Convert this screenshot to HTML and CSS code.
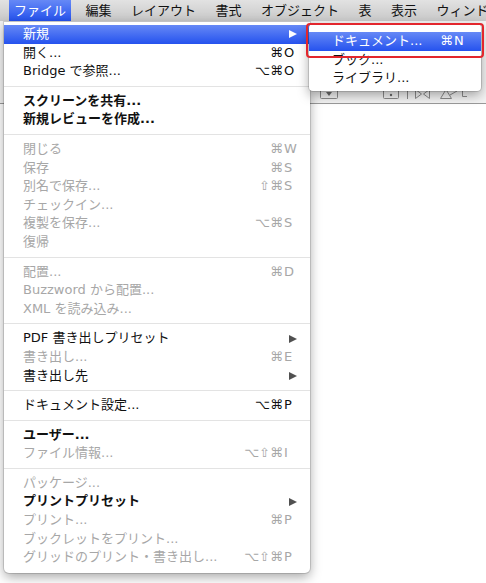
FILE: index.html
```html
<!DOCTYPE html>
<html lang="ja">
<head>
    <meta charset="UTF-8">
    <meta name="viewport" content="width=device-width, initial-scale=1.0">
    <title>ファイル メニュー</title>
    <link rel="stylesheet" href="styles.css">
</head>
<body>
    <header class="menubar">
        <span class="menubar-item is-open">ファイル</span>
        <span class="menubar-item">編集</span>
        <span class="menubar-item">レイアウト</span>
        <span class="menubar-item">書式</span>
        <span class="menubar-item">オブジェクト</span>
        <span class="menubar-item">表</span>
        <span class="menubar-item">表示</span>
        <span class="menubar-item">ウィンドウ</span>
    </header>

    <main class="workspace">
        <div class="toolbar">
            <svg class="toolbar-icons" width="486" height="14" viewBox="0 0 486 14">
                <g fill="none" stroke="#8c8c8c" stroke-width="1">
                    <rect x="320.5" y="0.5" width="17" height="10" rx="1"/>
                    <rect x="383.5" y="0.5" width="15" height="10" rx="1"/>
                    <line x1="407.5" y1="0" x2="407.5" y2="11"/>
                    <path d="M415.5 1.5 L421.5 6 L415.5 10.5 Z"/>
                    <path d="M429.5 1.5 L423.5 6 L429.5 10.5 Z"/>
                    <path d="M440.5 10.5 L446 1.5 L451.5 10.5 Z"/>
                    <path d="M450 7 L457 3"/>
                    <path d="M462.5 0 L462.5 8.5 L467 8.5"/>
                </g>
                <path d="M326 4 L332 4 L329 8 Z" fill="#6a6a6a"/>
                <circle cx="391" cy="7" r="1.2" fill="#6a6a6a"/>
            </svg>
        </div>
        <div class="document"></div>
    </main>

    <nav class="menu file-menu">
        <div class="menu-item is-active"><span class="label">新規</span><span class="arrow"></span></div>
        <div class="menu-item"><span class="label">開く...</span><span class="keys"><span class="mods">⌘</span><span class="key">O</span></span></div>
        <div class="menu-item"><span class="label">Bridge で参照...</span><span class="keys"><span class="mods">⌥⌘</span><span class="key">O</span></span></div>
        <div class="separator"></div>
        <div class="menu-item is-bold"><span class="label">スクリーンを共有...</span></div>
        <div class="menu-item is-bold"><span class="label">新規レビューを作成...</span></div>
        <div class="separator"></div>
        <div class="menu-item is-disabled"><span class="label">閉じる</span><span class="keys"><span class="mods">⌘</span><span class="key">W</span></span></div>
        <div class="menu-item is-disabled"><span class="label">保存</span><span class="keys"><span class="mods">⌘</span><span class="key">S</span></span></div>
        <div class="menu-item is-disabled"><span class="label">別名で保存...</span><span class="keys"><span class="mods">⇧⌘</span><span class="key">S</span></span></div>
        <div class="menu-item is-disabled"><span class="label">チェックイン...</span></div>
        <div class="menu-item is-disabled"><span class="label">複製を保存...</span><span class="keys"><span class="mods">⌥⌘</span><span class="key">S</span></span></div>
        <div class="menu-item is-disabled"><span class="label">復帰</span></div>
        <div class="separator"></div>
        <div class="menu-item is-disabled"><span class="label">配置...</span><span class="keys"><span class="mods">⌘</span><span class="key">D</span></span></div>
        <div class="menu-item is-disabled"><span class="label">Buzzword から配置...</span></div>
        <div class="menu-item is-disabled"><span class="label">XML を読み込み...</span></div>
        <div class="separator"></div>
        <div class="menu-item"><span class="label">PDF 書き出しプリセット</span><span class="arrow"></span></div>
        <div class="menu-item is-disabled"><span class="label">書き出し...</span><span class="keys"><span class="mods">⌘</span><span class="key">E</span></span></div>
        <div class="menu-item"><span class="label">書き出し先</span><span class="arrow"></span></div>
        <div class="separator"></div>
        <div class="menu-item"><span class="label">ドキュメント設定...</span><span class="keys"><span class="mods">⌥⌘</span><span class="key">P</span></span></div>
        <div class="separator"></div>
        <div class="menu-item is-bold"><span class="label">ユーザー...</span></div>
        <div class="menu-item is-disabled"><span class="label">ファイル情報...</span><span class="keys"><span class="mods">⌥⇧⌘</span><span class="key">I</span></span></div>
        <div class="separator"></div>
        <div class="menu-item is-disabled"><span class="label">パッケージ...</span></div>
        <div class="menu-item is-bold"><span class="label">プリントプリセット</span><span class="arrow"></span></div>
        <div class="menu-item is-disabled"><span class="label">プリント...</span><span class="keys"><span class="mods">⌘</span><span class="key">P</span></span></div>
        <div class="menu-item is-disabled"><span class="label">ブックレットをプリント...</span></div>
        <div class="menu-item is-disabled"><span class="label">グリッドのプリント・書き出し...</span><span class="keys"><span class="mods">⌥⇧⌘</span><span class="key">P</span></span></div>
    </nav>

    <nav class="menu submenu">
        <div class="menu-item is-active"><span class="label">ドキュメント...</span><span class="keys"><span class="mods">⌘</span><span class="key">N</span></span></div>
        <div class="menu-item"><span class="label">ブック...</span></div>
        <div class="menu-item"><span class="label">ライブラリ...</span></div>
    </nav>

    <div class="callout"></div>
</body>
</html>
```

FILE: styles.css
```css
:root {
    --menubar-top: #e2e2e2;
    --menubar-bottom: #c8c8c8;
    --highlight-top: #6689f6; /* 選択中の青 */
    --highlight-bottom: #2552ee;
    --text-color: #111;
    --disabled-color: #a7a7a7;
    --separator-color: #e3e3e3;
    --callout-color: #e3262d;
}

* {
    box-sizing: border-box;
}

body {
    margin: 0;
    width: 486px;
    height: 583px;
    overflow: hidden;
    position: relative;
    background: #fff;
    font-family: "DejaVu Sans", "Noto Sans CJK JP", sans-serif;
    font-size: 13px;
    color: var(--text-color);
}

/* メニューバー */
.menubar {
    display: flex;
    gap: 9.5px;
    height: 22px;
    padding-left: 9px;
    background: linear-gradient(var(--menubar-top), var(--menubar-bottom));
    border-bottom: 1px solid #f2f2f2;
}
.menubar-item {
    padding: 0 5px;
    line-height: 21px;
    white-space: nowrap;
}
.menubar-item.is-open {
    color: #fff;
    background: linear-gradient(var(--highlight-top), var(--highlight-bottom));
}

/* 背景のウィンドウ */
.workspace {
    display: flex;
    flex-direction: column;
    height: 561px;
}
.toolbar {
    display: flex;
    flex-direction: column;
    justify-content: flex-end;
    height: 82px;
    padding-bottom: 1px;
    background: #f3f3f3;
    border-bottom: 1px solid #9a9a9a;
}
.toolbar-icons {
    display: block;
}
.document {
    flex: 1;
    background: #fff;
}

/* プルダウンメニュー */
.menu {
    position: absolute;
    background: #fff;
    border-radius: 0 0 5px 5px;
    box-shadow: 0 0 0 1px rgba(0, 0, 0, 0.13), 0 4px 12px rgba(0, 0, 0, 0.35);
}
.file-menu {
    left: 4px;
    top: 22px;
    width: 306px;
    padding: 3px 0 6px;
}
.submenu {
    left: 309px;
    top: 24px;
    width: 172px;
    padding: 8px 0 3px;
    border-radius: 4px;
}
.menu-item {
    display: flex;
    align-items: center;
    height: 18.6px;
    padding: 0 12px 0 19px;
    line-height: 18.6px;
    white-space: nowrap;
}
.submenu .menu-item {
    padding: 0 13px 0 23px;
}
.menu-item.is-disabled {
    color: var(--disabled-color);
}
.menu-item.is-bold {
    font-weight: bold;
}
.menu-item.is-active {
    color: #fff;
    background: linear-gradient(var(--highlight-top), var(--highlight-bottom));
}
.label {
    flex: 1;
}
.keys {
    display: flex;
}
.mods {
    text-align: right;
}
.key {
    width: 15px;
    padding-left: 1px;
}
.arrow {
    width: 0;
    height: 0;
    margin-right: 1px;
    border-left: 8px solid #505050;
    border-top: 4.5px solid transparent;
    border-bottom: 4.5px solid transparent;
}
.is-active .arrow {
    border-left-color: #fff;
}
.separator {
    display: flex;
    align-items: center;
    height: 11px;
}
.separator::before {
    content: "";
    flex: 1;
    height: 1px;
    background: var(--separator-color);
}

/* 赤い枠の注釈 */
.callout {
    position: absolute;
    left: 306px;
    top: 23px;
    width: 178px;
    height: 35px;
    border: 2px solid var(--callout-color);
    border-radius: 4px;
}
```
